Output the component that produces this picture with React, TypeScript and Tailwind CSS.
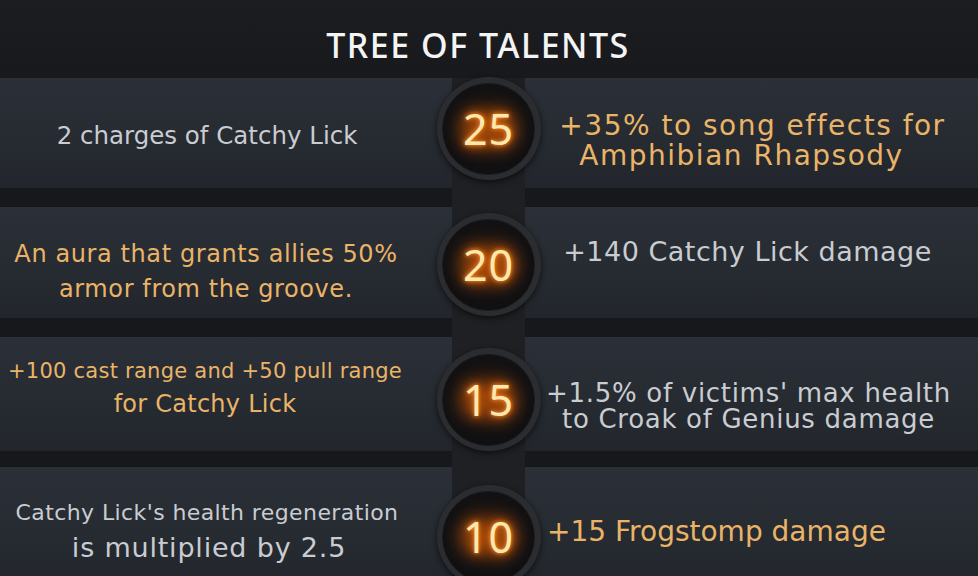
import React from "react";

const GRAY = "text-[#c9ccd1]";
const GOLD = "text-[#eab468]";

function Badge({ num, top }: { num: string; top: string }) {
  return (
    <div className={`relative z-10 flex h-[103px] w-[104px] shrink-0 items-center justify-center rounded-full bg-[#2b2c2f] shadow-[0_2px_6px_rgba(0,0,0,0.6)] ${top}`}>
      <div className="flex h-[92px] w-[93px] items-center justify-center rounded-full border border-[#1a1a1c] bg-[radial-gradient(circle_at_50%_45%,#1d1712_0%,#111113_60%,#0c0c0e_100%)]">
        <div className="relative flex items-center justify-center">
          <div className="absolute h-[36px] w-[56px] rounded-full bg-[#c2560c] opacity-70 blur-[9px]" />
          <span className="relative font-['Noto_Sans'] text-[43px] leading-none tracking-[1px] text-[#ffe8ae] [text-shadow:0_0_4px_#ff9a2e,0_0_10px_#e8680e,0_0_18px_#b84c06]">
            {num}
          </span>
        </div>
      </div>
    </div>
  );
}

function Row({
  h,
  num,
  top,
  left,
  right,
}: {
  h: string;
  num: string;
  top: string;
  left: React.ReactNode;
  right: React.ReactNode;
}) {
  return (
    <div className={`grid grid-cols-[452px_73px_1fr] ${h}`}>
      <div className="flex items-center justify-center bg-[linear-gradient(180deg,#2b2f37_0%,#262a31_60%,#22252c_100%)] pr-[38px] text-center">
        {left}
      </div>
      <div className="flex justify-center">
        <Badge num={num} top={top} />
      </div>
      <div className="flex items-center justify-center bg-[linear-gradient(180deg,#2b2f37_0%,#262a31_60%,#22252c_100%)] text-center">
        {right}
      </div>
    </div>
  );
}

export default function App() {
  return (
    <div className="h-[576px] w-[978px] overflow-hidden bg-[#17181b] font-['DejaVu_Sans',sans-serif]">
      <div className="flex h-[78px] items-center justify-center bg-[linear-gradient(180deg,#1c1d20,#18191c)] pr-[22px] pt-[12px]">
        <h1 className="font-['Noto_Sans'] text-[34px] font-medium leading-none tracking-[1.5px] text-[#f4f4f4]">TREE OF TALENTS</h1>
      </div>
      <div className="bg-[linear-gradient(to_right,#17181b_452px,#1f2023_452px,#1f2023_525px,#17181b_525px)]">
        <Row
          h="h-[110px]"
          num="25"
          top="-mt-[1px]"
          left={<p className={`pt-[6px] text-[24.5px] leading-[28px] ${GRAY}`}>2 charges of Catchy Lick</p>}
          right={
            <div className={`flex flex-col items-center pl-[2px] pt-[16px] text-[28px] leading-none tracking-[1.5px] ${GOLD}`}>
              <span>+35% to song effects for</span>
              <span className="mt-[2px] pr-[22px]">Amphibian Rhapsody</span>
            </div>
          }
        />
        <Row
          h="h-[111px] mt-[19px]"
          num="20"
          top="mt-[6px]"
          left={
            <div className={`flex flex-col items-center pr-[2px] pt-[18px] text-[24px] leading-none tracking-[0.6px] ${GOLD}`}>
              <span>An aura that grants allies 50%</span>
              <span className="mt-[11px]">armor from the groove.</span>
            </div>
          }
          right={<p className={`pb-[22px] pr-[8px] text-[27px] leading-[30px] tracking-[0.5px] ${GRAY}`}>+140 Catchy Lick damage</p>}
        />
        <Row
          h="h-[114px] mt-[19px]"
          num="15"
          top="mt-[11px]"
          left={
            <div className={`flex flex-col items-center pb-[12px] pr-[4px] leading-none tracking-[0.25px] ${GOLD}`}>
              <span className="text-[21px]">+100 cast range and +50 pull range</span>
              <span className="mt-[10px] text-[24px]">for Catchy Lick</span>
            </div>
          }
          right={
            <div className={`flex flex-col items-center pt-[24px] pr-[6px] text-[26px] leading-none tracking-[0.7px] ${GRAY}`}>
              <span>+1.5% of victims' max health</span>
              <span>to Croak of Genius damage</span>
            </div>
          }
        />
        <Row
          h="h-[110px] mt-[16px]"
          num="10"
          top="mt-[18px]"
          left={
            <div className={`flex flex-col items-center pt-[8px] leading-none ${GRAY}`}>
              <span className="text-[22px] tracking-[0.4px]">Catchy Lick's health regeneration</span>
              <span className="mt-[10px] pl-[4px] text-[27px] tracking-[0.8px]">is multiplied by 2.5</span>
            </div>
          }
          right={<p className={`pr-[70px] pt-[8px] text-[28px] leading-[30px] ${GOLD}`}>+15 Frogstomp damage</p>}
        />
      </div>
    </div>
  );
}
